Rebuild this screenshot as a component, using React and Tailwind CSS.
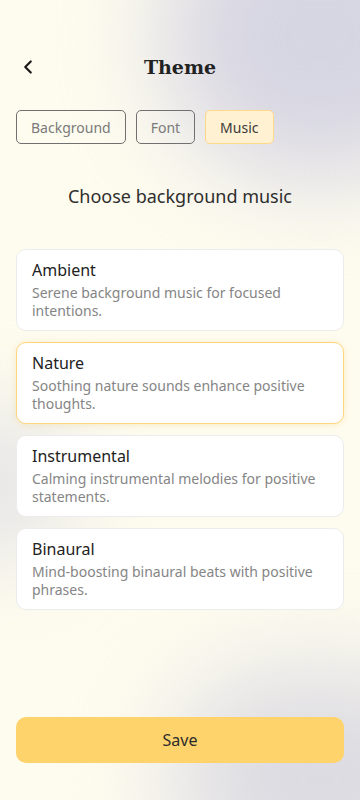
import { ChevronLeft } from 'lucide-react'
import { useState } from 'react'

const tabs = ['Background', 'Font', 'Music']

const tracks = [
  { name: 'Ambient', desc: 'Serene background music for focused intentions.' },
  { name: 'Nature', desc: 'Soothing nature sounds enhance positive thoughts.' },
  { name: 'Instrumental', desc: 'Calming instrumental melodies for positive statements.' },
  { name: 'Binaural', desc: 'Mind-boosting binaural beats with positive phrases.' },
]

export default function App() {
  const [tab, setTab] = useState('Music')
  const [selected, setSelected] = useState('Nature')

  return (
    <div className="relative w-[360px] h-[800px] overflow-hidden bg-[#fefcef] font-['Noto_Sans',sans-serif] text-[#2b2b2b]">
      {/* soft background blobs */}
      <div className="absolute -right-[120px] -top-[110px] w-[320px] h-[290px] rounded-full bg-[#d6d5e2] blur-[50px]" />
      <div className="absolute -left-[110px] top-[410px] w-[190px] h-[150px] rounded-full bg-[#e6e5e6] blur-[45px]" />
      <div className="absolute -right-[110px] -bottom-[90px] w-[300px] h-[220px] rounded-full bg-[#dcdbe2] blur-[50px]" />

      <div className="relative flex flex-col h-full px-4">
        <div className="relative flex items-center justify-center h-[30px] mt-[52px]">
          <button className="absolute left-[1px] top-[4px] text-[#1a1a1a]">
            <ChevronLeft size={22} strokeWidth={2.4} />
          </button>
          <h1 className="font-['DejaVu_Serif',serif] font-bold text-[19px] text-[#222]">Theme</h1>
        </div>

        <div className="flex gap-[10px] mt-[28px]">
          {tabs.map((t) => (
            <button
              key={t}
              onClick={() => setTab(t)}
              className={`h-[34px] px-[14px] rounded-[5px] border text-[14px] ${
                tab === t ? 'bg-[#fff1d2] border-[#fed98a] text-[#3a3a3a]' : 'border-[#707070] text-[#7a7a7a]'
              }`}
            >
              {t}
            </button>
          ))}
        </div>

        <p className="text-center text-[18px] text-[#2e2e2e] mt-[39px]">Choose background music</p>

        <div className="flex flex-col gap-[11px] mt-[39px]">
          {tracks.map((tr) => (
            <button
              key={tr.name}
              onClick={() => setSelected(tr.name)}
              className={`text-left bg-white rounded-[10px] border pl-[15px] pr-[24px] pt-[9px] pb-[10px] ${
                selected === tr.name ? 'border-[#fdd67c] shadow-[0_1px_6px_rgba(240,190,80,0.25)]' : 'border-[#ececec]'
              }`}
            >
              <div className="text-[16px] leading-[22px] text-[#222]">{tr.name}</div>
              <div className="text-[14px] leading-[18px] text-[#858585] mt-[3px]">{tr.desc}</div>
            </button>
          ))}
        </div>

        <button className="mt-auto mb-[37px] h-[46px] rounded-[10px] bg-[#ffd36b] text-[16px] text-[#2b2b2b]">Save</button>
      </div>
    </div>
  )
}
